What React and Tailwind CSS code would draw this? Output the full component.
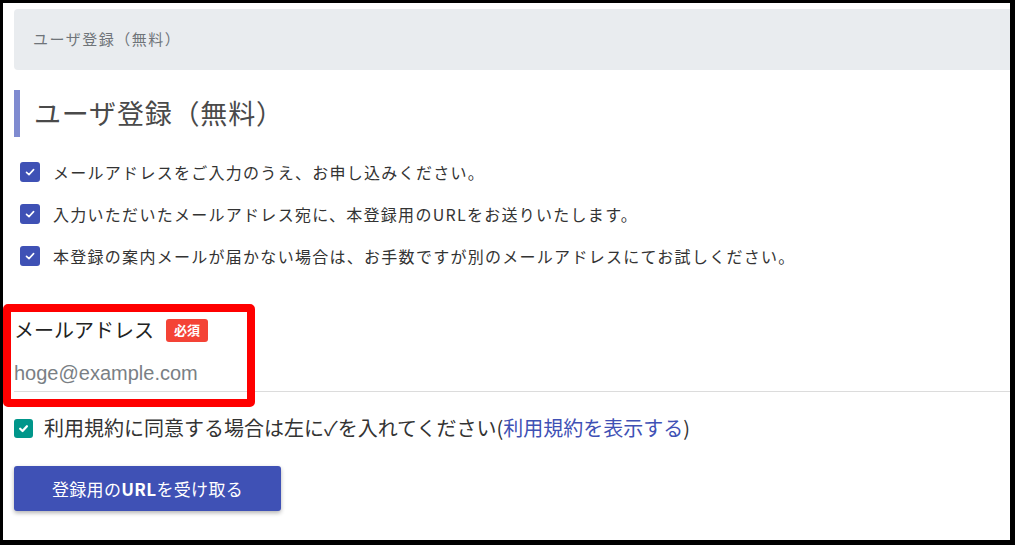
import React from 'react';

const notes = [
  'メールアドレスをご入力のうえ、お申し込みください。',
  '入力いただいたメールアドレス宛に、本登録用のURLをお送りいたします。',
  '本登録の案内メールが届かない場合は、お手数ですが別のメールアドレスにてお試しください。',
];

const Check = ({ className }) => (
  <svg viewBox="0 0 20 20" className={className} fill="none" stroke="white" strokeLinecap="round" strokeLinejoin="round">
    <path d="M6.5 10.3 L9 12.6 L13.6 7.6" />
  </svg>
);

export default function App() {
  return (
    <div className="relative w-[1015px] h-[545px] overflow-hidden bg-white border-black border-t-[3px] border-l-[3px] border-r-[5px] border-b-[5px] font-['Noto_Sans_CJK_JP',sans-serif]">
      <div className="pl-[11px] pt-[6px] flex flex-col">
        {/* breadcrumb */}
        <div className="h-[61px] rounded-l-[4px] bg-[#e9ecef] flex items-center pl-[19px] text-[15px] tracking-[0.1em] text-[#6f7479]">
          ユーザ登録（無料）
        </div>

        {/* heading */}
        <h1 className="mt-[20px] h-[47px] border-l-[6px] border-[#7f8bd0] pl-[14px] flex items-center text-[27px] tracking-[0.03em] text-[#4a4a4a]">
          ユーザ登録（無料）
        </h1>

        {/* notes */}
        <ul className="mt-[14px]">
          {notes.map((n, i) => (
            <li key={i} className="h-[42px] flex items-center ml-[6px]">
              <span className="w-[20px] h-[20px] rounded-[3px] bg-[#3f51b5] flex items-center justify-center shrink-0">
                <Check className="w-[20px] h-[20px] stroke-[1.6]" />
              </span>
              <span className="ml-[13px] text-[16px] tracking-[0.08em] text-[#333] whitespace-nowrap">{n}</span>
            </li>
          ))}
        </ul>

        {/* email field */}
        <div className="mt-[41px] h-[24px] flex items-center">
          <span className="text-[20px] text-[#222]">メールアドレス</span>
          <span className="ml-[12px] h-[23px] px-[8px] rounded-[3px] bg-[#f44336] text-white text-[13px] font-bold flex items-center">
            必須
          </span>
        </div>
        <input
          type="email"
          placeholder="hoge@example.com"
          className="mt-[14px] h-[36px] w-full border-b border-[#dcdcdc] outline-none text-[20px] font-['Liberation_Sans',sans-serif] placeholder:text-[#7a7f85]"
        />

        {/* agreement */}
        <div className="mt-[26px] h-[20px] flex items-center">
          <span className="w-[19px] h-[19px] rounded-[3px] bg-[#00968a] flex items-center justify-center shrink-0">
            <Check className="w-[19px] h-[19px] stroke-[2.4]" />
          </span>
          <span className="ml-[11px] text-[20px] text-[#333] whitespace-nowrap">
            利用規約に同意する場合は左に✓を入れてください(<a href="#" className="text-[#3f51b5]">利用規約を表示する</a>)
          </span>
        </div>

        {/* submit */}
        <button className="mt-[28px] w-[267px] h-[45px] rounded-[3px] bg-[#3f51b5] text-white text-[17px] tracking-[0.02em] shadow-[0_2px_4px_rgba(0,0,0,0.3)]">
          登録用の<span className="font-bold">URL</span>を受け取る
        </button>
      </div>

      {/* annotation box */}
      <div className="absolute left-0 top-[301px] w-[252px] h-[103px] border-[8px] border-[#ff0000] rounded-[5px]" />
    </div>
  );
}
